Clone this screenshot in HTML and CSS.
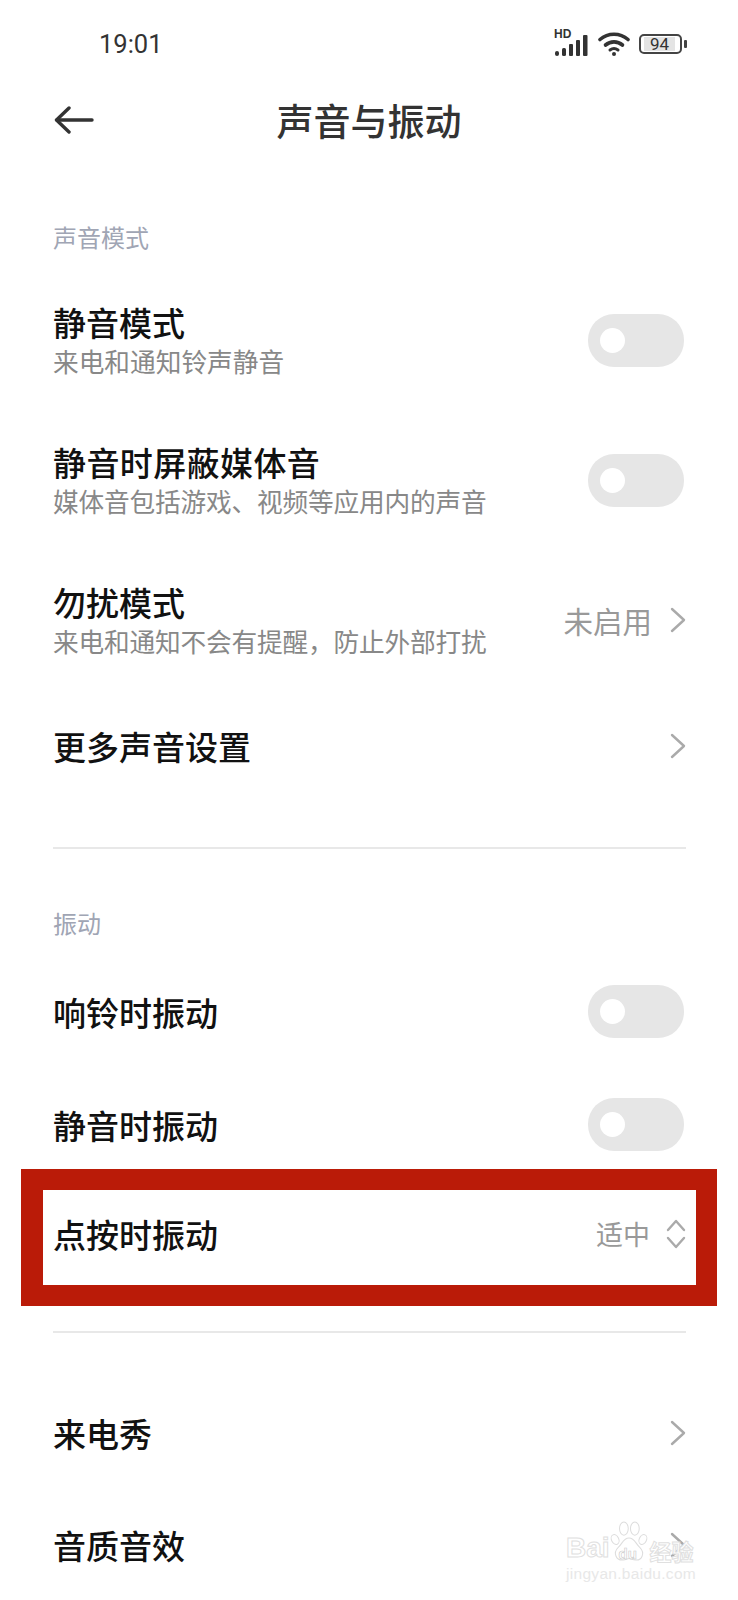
FILE: index.html
```html
<!DOCTYPE html>
<html lang="zh">
<head>
	<meta charset="UTF-8">
	<title>声音与振动</title>
	<link rel="stylesheet" href="styles.css">
</head>
<body>
	<div class="page">
		<div class="status">
			<span class="time">19:01</span>
			<div class="status-icons">
				<div class="signal">
					<span class="hd">HD</span>
					<svg width="34" height="22" viewBox="0 0 34 22"><rect x="0" y="16" width="4" height="5" rx="2"/><rect x="7" y="13" width="4" height="8" rx="1.5"/><rect x="14" y="9" width="4" height="12" rx="1"/><rect x="21" y="5" width="4" height="16" rx="1"/><rect x="28" y="0" width="4.5" height="21" rx="1"/></svg>
				</div>
				<svg class="wifi" width="32" height="26" viewBox="0 0 32 26" fill="none" stroke="#333" stroke-width="3.6" stroke-linecap="round"><path d="M2 8.5C10 1.5 22 1.5 30 8.5"/><path d="M7.5 14C12.5 9.8 19.5 9.8 24.5 14"/><path d="M12 19C14.5 17.2 17.5 17.2 20 19" stroke-width="3"/><circle cx="16" cy="23" r="2" fill="#333" stroke="none"/></svg>
				<div class="battery">
					<div class="battery-body"><span class="battery-fill">94</span></div>
					<span class="battery-tip"></span>
				</div>
			</div>
		</div>

		<div class="nav">
			<svg class="back" width="40" height="28" viewBox="0 0 40 28" fill="none" stroke="#333" stroke-width="3.4" stroke-linecap="round" stroke-linejoin="round"><path d="M38 14H3"/><path d="M15 2L2.5 14L15 26"/></svg>
			<h1 class="nav-title">声音与振动</h1>
		</div>

		<div class="section-head first">声音模式</div>

		<div class="row row-tall">
			<div class="row-text">
				<div class="row-title">静音模式</div>
				<div class="row-sub">来电和通知铃声静音</div>
			</div>
			<div class="toggle"><span class="knob"></span></div>
		</div>
		<div class="row row-tall">
			<div class="row-text">
				<div class="row-title row-title-wide">静音时屏蔽媒体音</div>
				<div class="row-sub row-sub-tight">媒体音包括游戏、视频等应用内的声音</div>
			</div>
			<div class="toggle"><span class="knob"></span></div>
		</div>
		<div class="row row-tall">
			<div class="row-text">
				<div class="row-title">勿扰模式</div>
				<div class="row-sub row-sub-tight">来电和通知不会有提醒，防止外部打扰</div>
			</div>
			<div class="row-right">
				<span class="value">未启用</span>
				<svg class="chev" width="16" height="26" viewBox="0 0 16 26" fill="none" stroke="#aaa" stroke-width="2.4" stroke-linecap="round" stroke-linejoin="round"><path d="M2 2L14 13L2 24"/></svg>
			</div>
		</div>
		<div class="row row-more">
			<div class="row-title">更多声音设置</div>
			<svg class="chev" width="16" height="26" viewBox="0 0 16 26" fill="none" stroke="#aaa" stroke-width="2.4" stroke-linecap="round" stroke-linejoin="round"><path d="M2 2L14 13L2 24"/></svg>
		</div>

		<div class="divider div-one"></div>

		<div class="section-head second">振动</div>

		<div class="row row-short">
			<div class="row-title">响铃时振动</div>
			<div class="toggle"><span class="knob"></span></div>
		</div>
		<div class="row row-short">
			<div class="row-title">静音时振动</div>
			<div class="toggle"><span class="knob"></span></div>
		</div>

		<div class="highlight">
			<div class="highlight-inner">
				<div class="row-title">点按时振动</div>
				<div class="row-right row-right-tight">
					<span class="value value-small">适中</span>
					<svg width="20" height="30" viewBox="0 0 20 30" fill="none" stroke="#aaa" stroke-width="2.4" stroke-linecap="round" stroke-linejoin="round"><path d="M2 11L10 2L18 11"/><path d="M2 19L10 28L18 19"/></svg>
				</div>
			</div>
		</div>

		<div class="divider div-two"></div>

		<div class="row row-bottom">
			<div class="row-title">来电秀</div>
			<svg class="chev" width="16" height="26" viewBox="0 0 16 26" fill="none" stroke="#aaa" stroke-width="2.4" stroke-linecap="round" stroke-linejoin="round"><path d="M2 2L14 13L2 24"/></svg>
		</div>
		<div class="row row-bottom">
			<div class="row-title">音质音效</div>
			<svg class="chev" width="16" height="26" viewBox="0 0 16 26" fill="none" stroke="#aaa" stroke-width="2.4" stroke-linecap="round" stroke-linejoin="round"><path d="M2 2L14 13L2 24"/></svg>
		</div>

		<!-- watermark sits over the last row -->
		<div class="watermark">
			<div class="wm-top">
				<span class="wm-bai">Bai</span>
				<div class="wm-paw">
					<svg width="52" height="58" viewBox="0 0 52 58" fill="#fff" stroke="#ddd" stroke-width="1.4"><ellipse cx="7" cy="27" rx="5" ry="7" transform="rotate(-25 7 27)"/><ellipse cx="19" cy="12" rx="6" ry="9"/><ellipse cx="34" cy="12" rx="6" ry="9"/><ellipse cx="45" cy="27" rx="5" ry="7" transform="rotate(25 45 27)"/><path d="M26 25C18 25 17 33 11 38C4 45 8 56 18 55C22 55 24 53 26 53C28 53 31 55 35 55C44 56 48 45 41 38C35 33 34 25 26 25Z"/></svg>
					<span class="wm-du">du</span>
				</div>
				<span class="wm-cn">经验</span>
			</div>
			<div class="wm-url">jingyan.baidu.com</div>
		</div>
	</div>
</body>
</html>
```

FILE: styles.css
```css
*{box-sizing: border-box; margin: 0; padding: 0;}
html, body{width: 738px; height: 1600px; overflow: hidden; background: #fff;}
body{font-family: "Noto Sans CJK SC", "Noto Sans", sans-serif; color: #111;}
.page{position: relative; width: 738px; height: 1600px; padding: 0 53px; overflow: hidden;}

/* status bar */
.status{display: flex; justify-content: space-between; align-items: center; height: 88px; padding-left: 46px;}
.time{font-family: Roboto, sans-serif; font-size: 25.5px; color: #333;}
.status-icons{display: flex; align-items: center; gap: 9px; margin-right: -2px;}
.signal{position: relative; width: 34px; height: 26px; display: flex; align-items: flex-end; margin-left: 1px;}
.signal svg{fill: #333;}
.hd{position: absolute; left: -1px; top: -4px; font-family: "Liberation Sans", sans-serif; font-size: 12px; font-weight: bold; color: #333;}
.battery{display: flex; align-items: center; gap: 2px;}
.battery-body{width: 43px; height: 20px; border: 2px solid #444; border-radius: 5px; padding: 1px 3px; display: flex;}
.battery-fill{width: 31px; background: #e4e4e4; font-family: Roboto, sans-serif; font-size: 17px; line-height: 14px; text-align: center; color: #333;}
.battery-tip{width: 3px; height: 8px; background: #444; border-radius: 1px;}

/* title bar */
.nav{position: relative; height: 68px; display: flex; align-items: center; justify-content: center; padding-bottom: 4px;}
.back{position: absolute; left: 1px; top: 18px;}
.nav-title{font-size: 37px; font-weight: 500; color: #333; line-height: 1;}

.section-head{font-size: 24px; line-height: 30px; color: #a0a5b4;}
.section-head.first{margin-top: 66px; margin-bottom: 18px;}
.section-head.second{margin-top: 59px; margin-bottom: 17px;}

/* rows */
.row{display: flex; justify-content: space-between; align-items: center;}
.row-tall{height: 140px;}
.row-title{font-size: 33px; font-weight: 500; line-height: 42px; color: #111;}
.row-title-wide{letter-spacing: 0.4px;}
.row-sub{font-size: 25.7px; line-height: 36px; color: #888;}
.row-sub-tight{letter-spacing: -0.18px;}
.row-right{display: flex; align-items: center; gap: 18px;}
.row-right-tight{gap: 16px;}
.value{font-size: 29.5px; color: #999; line-height: 36px;}
.value-small{font-size: 27px;}
.toggle{width: 96px; height: 53px; border-radius: 26px; background: #e6e6e6; display: flex; align-items: center; padding-left: 12px; flex-shrink: 0; margin-right: 1px;}
.knob{width: 25px; height: 25px; border-radius: 50%; background: #fff;}
.chev{margin-right: -1px;}
.row-more{height: 72px; margin-top: 20px;}
.row-short{height: 113px;}

.divider{height: 2px; background: #e8e8e8; margin-right: -1px;}
.div-one{margin-top: 65px;}
.div-two{margin-top: 25px; margin-bottom: 44px;}

/* red frame */
.highlight{margin: -12px -32px 0 -32px; height: 137px; border: 21px solid #ba1b08; border-left-width: 22px; background: #fff; padding: 0 10px 0 10px;}
.highlight-inner{height: 100%; display: flex; justify-content: space-between; align-items: center; padding-bottom: 7px;}

.row-bottom{height: 112px;}

.watermark{position: absolute; left: 566px; top: 1531px; width: 140px;}
.wm-top{display: flex; align-items: flex-end;}
.wm-bai, .wm-cn{font-family: "Liberation Sans", sans-serif; font-size: 28px; line-height: 34px; font-weight: bold; color: #fff; -webkit-text-stroke: 1px #e0e0e0;}
.wm-cn{font-family: "Noto Sans CJK SC", sans-serif; font-size: 22px; line-height: 30px; margin-left: 2px;}
.wm-paw{position: relative; width: 38px; height: 40px; margin-top: -16px;}
.wm-paw svg{position: absolute; left: 0; top: -6px; width: 38px; height: 44px;}
.wm-du{position: absolute; left: 9px; bottom: 3px; font-family: "Liberation Sans", sans-serif; font-size: 15px; font-weight: bold; color: #fff; -webkit-text-stroke: 0.6px #ccc;}
.wm-url{font-family: "Liberation Sans", sans-serif; font-size: 15.5px; line-height: 18px; color: #e8e8e8; letter-spacing: 0.3px; white-space: nowrap;}
```
